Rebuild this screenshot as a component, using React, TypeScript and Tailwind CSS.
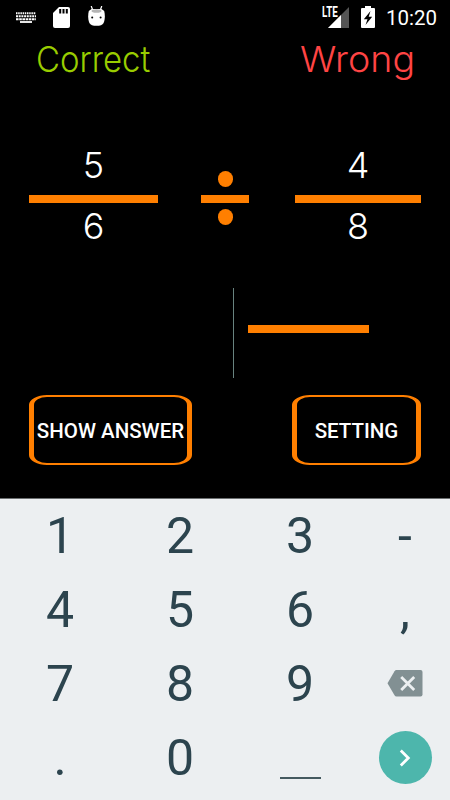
import React from 'react';

const HAND = "font-['Inter','Open_Sans',sans-serif] font-light";

function StatusBar() {
  return (
    <header className="flex h-9 items-start pl-4 pr-3 text-white">
      <svg className="mt-3 h-[11px] w-5" viewBox="0 0 20 11" fill="none" stroke="white">
        <path d="M0 1.200H20" strokeWidth="2" strokeDasharray="1.500 .7" />
        <path d="M0 4.200H20" strokeWidth="2" strokeDasharray="2 .7" />
        <path d="M0 7.200H20" strokeWidth="2" strokeDasharray="2.600 .6" />
        <path d="M4 10H16" strokeWidth="1.800" />
      </svg>
      <svg className="ml-[17px] mt-[7px] h-[21px] w-[17px]" viewBox="0 0 17 21">
        <path fill="white" d="M6 0h9a2 2 0 0 1 2 2v17a2 2 0 0 1-2 2H2a2 2 0 0 1-2-2V6z" />
        <path stroke="black" strokeWidth="2" d="M7.200 2v4.500M10.500 2v4.500M13.800 2v4.500" />
      </svg>
      <svg className="ml-[18px] mt-1.5 h-5 w-[17px]" viewBox="0 0 17 20">
        <path stroke="white" strokeWidth="1.200" d="M3.200 0l1.500 4M13.800 0l-1.500 4" />
        <path fill="white" d="M.8 5C-.2 9 0 14 1.400 17c1 2 3.600 2.800 7.100 2.800s6.100-.8 7.100-2.800C17 14 17.200 9 16.200 5L13.500 3h-10z" />
        <ellipse cx="8.500" cy="5" rx="5" ry="1.800" fill="#b5b5b5" />
        <circle cx="4.200" cy="11.500" r="1" fill="black" />
        <circle cx="12.600" cy="11.500" r="1" fill="black" />
      </svg>
      <div className="ml-auto flex items-start">
        <span className="mr-[-12px] mt-[5px] w-[18px] origin-left scale-x-[.7] font-['Roboto',sans-serif] text-[14px] font-bold leading-[14px]">LTE</span>
        <svg className="h-[28px] w-[21px]" viewBox="0 0 21 28">
          <path fill="#555" d="M21 7v21H0z" />
          <path fill="white" d="M13 15v13H0z" />
        </svg>
        <svg className="ml-3 mt-1.5 h-[22px] w-3.5" viewBox="0 0 14 22">
          <path fill="white" d="M4 0h6v2h3q1 0 1 1v18q0 1-1 1H1q-1 0-1-1V3q0-1 1-1h3z" />
          <path fill="black" d="M9.500 5L2.800 13.300h3.700L4.500 19l6.700-8.300H7.700z" />
        </svg>
        <span className="ml-[11px] mt-1 w-[52px] whitespace-nowrap font-['Roboto',sans-serif] text-[20.500px] font-[450] leading-7">10:20</span>
      </div>
    </header>
  );
}

function Fraction({ top, bottom, className }: { top: string; bottom: string; className: string }) {
  return (
    <div className={'flex flex-col items-center ' + className}>
      <span className={'h-[50px] text-[36px] leading-[50px] ' + HAND}>{top}</span>
      <div className="mt-[5px] h-2 w-full bg-[#ff7f00]" />
      <span className={'mt-[-2px] h-[50px] text-[36px] leading-[50px] ' + HAND}>{bottom}</span>
    </div>
  );
}

function OutlineButton({ label, className }: { label: string; className: string }) {
  return (
    <button
      className={
        "flex h-[70px] items-center justify-center whitespace-nowrap rounded-[18px/10px] border-x-[5px] border-y-2 border-[#ff7f00] pt-[3px] font-['Roboto',sans-serif] text-[20.500px] font-medium text-white " +
        className
      }
    >
      {label}
    </button>
  );
}

const keys = ['1', '2', '3', '-', '4', '5', '6', ',', '7', '8', '9', 'delete', '.', '0', 'space', 'next'];

function KeyFace({ name }: { name: string }) {
  if (name === 'delete')
    return (
      <svg className="mb-[2px] h-[27px] w-9" viewBox="0 0 36 27">
        <path fill="#829093" d="M9.500 0H33.500a2 2 0 0 1 2 2v22.500a2 2 0 0 1-2 2H9.500q-1.200 0-2-1.200L.5 13.250 7.500 1.200Q8.300 0 9.500 0z" />
        <path stroke="#eceff1" strokeWidth="2.800" d="M14.200 7l13 13M27.200 7l-13 13" />
      </svg>
    );
  if (name === 'space') return <div className="mt-10 h-0.5 w-[41px] bg-[#455a60]" />;
  if (name === 'next')
    return (
      <div className="mb-px flex size-[53px] items-center justify-center rounded-full bg-[#4db6ac]">
        <svg className="h-[18px] w-3" viewBox="0 0 12 18" fill="none" stroke="white" strokeWidth="2.800">
          <path d="M1.800 1.500L9.300 9l-7.500 7.500" />
        </svg>
      </div>
    );
  return <span>{name}</span>;
}

export default function App() {
  return (
    <main className="flex h-[800px] w-[450px] flex-col overflow-hidden bg-black text-white">
      <StatusBar />
      <div className={'flex h-[109px] justify-between pl-9 pr-[35px] text-[36px] leading-[46px] ' + HAND}>
        <span className="w-[115px] origin-left scale-x-[.915] text-[#99cc00]">Correct</span>
        <span className="w-[115px] origin-left scale-x-[1.045] text-[#ff4444]">Wrong</span>
      </div>
      <section className="flex h-[143px] pl-[29px]">
        <Fraction top="5" bottom="6" className="mt-[-5px] w-[129px]" />
        <div className="ml-[43px] mt-[26px] flex w-12 flex-col items-center">
          <div className="h-4 w-[15px] rounded-full bg-[#ff7f00]" />
          <div className="mt-2 h-2 w-full bg-[#ff7f00]" />
          <div className="mt-1.5 h-4 w-[15px] rounded-full bg-[#ff7f00]" />
        </div>
        <Fraction top="4" bottom="8" className="ml-[46px] mt-[-5px] w-[126px]" />
      </section>
      <section className="flex h-[107px] items-start pl-[233px]">
        <div className="h-[90px] w-px bg-[#68837f]" />
        <div className="ml-3.5 mt-[37px] h-2 w-[121px] bg-[#ff7f00]" />
      </section>
      <section className="flex h-[103px] items-start justify-between pl-[29px] pr-[29px]">
        <OutlineButton label="SHOW ANSWER" className="w-[163px]" />
        <OutlineButton label="SETTING" className="w-[129px]" />
      </section>
      <section className="grid h-[302px] grid-cols-[120px_120px_120px_90px] grid-rows-[74px_74px_74px_74px] border-t border-[#6b6f70] bg-[#eceff1] font-['Roboto',sans-serif] text-[50px] leading-[74px] text-[#2c444e]">
        {keys.map((k) => (
          <div key={k} className="flex items-center justify-center">
            <KeyFace name={k} />
          </div>
        ))}
      </section>
    </main>
  );
}
